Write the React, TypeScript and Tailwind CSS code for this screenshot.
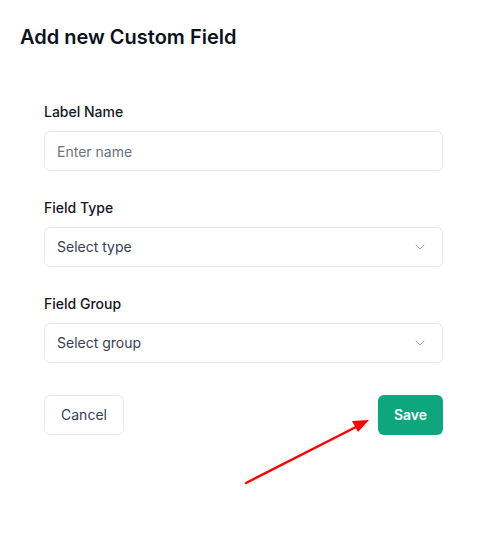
import React from 'react';
import { ChevronDown } from 'lucide-react';

const Field: React.FC<{ label: string; children: React.ReactNode }> = ({ label, children }) => (
  <div className="flex flex-col">
    <label className="text-sm leading-5 font-medium text-[#111827] mb-[9px]">{label}</label>
    {children}
  </div>
);

const SelectBox: React.FC<{ placeholder: string }> = ({ placeholder }) => (
  <div className="h-10 w-full rounded-md border border-[#e2e8f0] bg-white pl-3 pr-[14px] flex items-center justify-between">
    <span className="text-sm text-[#374151]">{placeholder}</span>
    <ChevronDown className="w-4 h-4 text-[#9ca3af]" strokeWidth={1.5} />
  </div>
);

export default function App() {
  return (
    <div className="relative w-[485px] h-[543px] bg-white" style={{ fontFamily: 'Inter, "Noto Sans", sans-serif' }}>
      <div className="pt-[23px] pl-5">
        <h1 className="text-xl leading-7 font-semibold text-[#0b1220]">Add new Custom Field</h1>
      </div>

      <div className="mt-[51px] ml-[44px] w-[399px] flex flex-col gap-[27px]">
        <Field label="Label Name">
          <input
            placeholder="Enter name"
            className="h-10 w-full rounded-md border border-[#e2e8f0] bg-white px-3 text-sm text-[#374151] placeholder:text-[#6b7280] outline-none"
          />
        </Field>
        <Field label="Field Type">
          <SelectBox placeholder="Select type" />
        </Field>
        <Field label="Field Group">
          <SelectBox placeholder="Select group" />
        </Field>

        <div className="flex items-center justify-between mt-[5px]">
          <button className="h-10 w-20 rounded-md border border-[#e2e8f0] bg-white text-sm font-normal text-[#334155]">
            Cancel
          </button>
          <button className="h-10 w-[65px] rounded-md bg-[#0ea67d] text-sm font-semibold text-white">
            Save
          </button>
        </div>
      </div>

      {/* annotation arrow */}
      <svg className="absolute left-0 top-0 pointer-events-none" width="485" height="543">
        <line x1="246" y1="483" x2="356" y2="427" stroke="#ff0000" strokeWidth="2.5" strokeLinecap="round" />
        <polygon points="369,420 352,421 358,432" fill="#ff0000" />
      </svg>
    </div>
  );
}
